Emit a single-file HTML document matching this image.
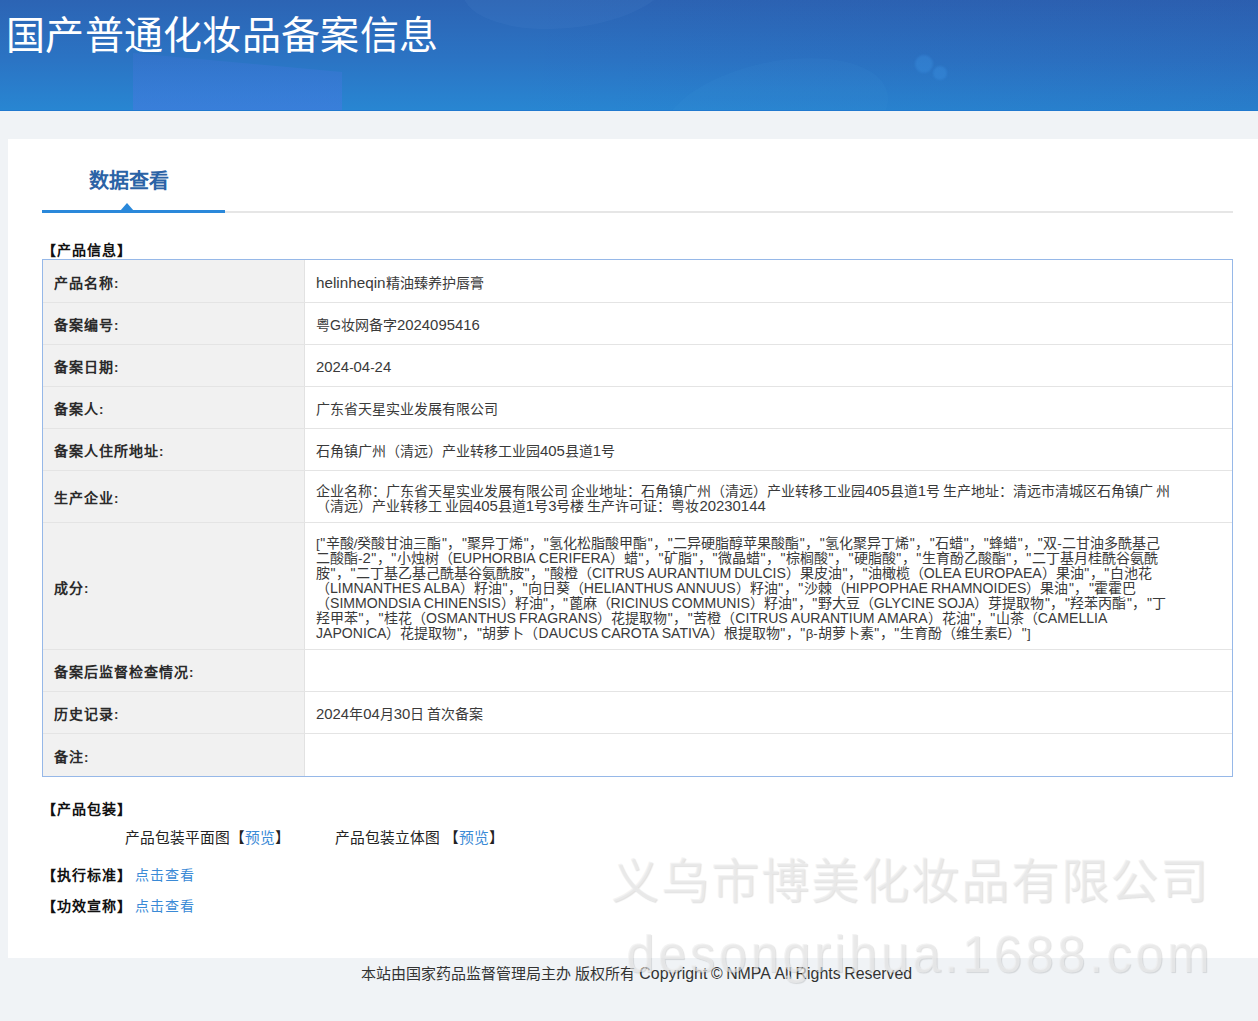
<!DOCTYPE html>
<html lang="zh-CN">
<head>
<meta charset="utf-8">
<style>
*{margin:0;padding:0;box-sizing:border-box}
html,body{width:1258px;height:1021px;overflow:hidden;background:#f0f3f6;font-family:"Liberation Sans",sans-serif;color:#333;font-size:14px}
.a{position:absolute;white-space:nowrap}
span{line-height:0}.U{font-size:14.1px}.L{font-size:15.25px}.D{font-size:14.9px}.Q{padding:0 0.5px}.O{font-size:13.3px}.S{word-spacing:-0.9px}
#hdr{position:absolute;left:0;top:0;width:1258px;height:111px;border-bottom:1px solid #2079cf;background:linear-gradient(180deg,#2c64b4 0%,#2b74c4 55%,#2886d2 100%);overflow:hidden}
#hdr .t{position:absolute;left:6px;top:11px;font-size:39px;letter-spacing:0.3px;color:#fff;line-height:50px;white-space:nowrap}
#panel{position:absolute;left:8px;top:139px;width:1250px;height:819px;background:#fff}
.tab{left:89px;top:166px;font-size:20px;font-weight:bold;color:#2b63a6;line-height:30px}
.gline{position:absolute;left:225px;top:211px;width:1008px;height:2px;background:#e6e6e6}
.bline{position:absolute;left:42px;top:210px;width:183px;height:3px;background:#2a88da}
.tri{position:absolute;left:120px;top:203px;width:0;height:0;border-left:7px solid transparent;border-right:7px solid transparent;border-bottom:8px solid #2a88da}
.sec{font-weight:bold;line-height:20px;color:#111;letter-spacing:1px}
#tbl{position:absolute;left:42px;top:259px;width:1191px;height:518px;border:1px solid #96b8e8;background:#fff}
#lcol{position:absolute;left:43px;top:260px;width:261px;height:516px;background:#f1f1f1}
#vsep{position:absolute;left:304px;top:260px;width:1px;height:516px;background:#e2e2e2}
.hsep{position:absolute;left:43px;width:1189px;height:1px;background:#e4e4e4}
.l{font-weight:bold;color:#2a2a2a;line-height:15px;letter-spacing:1px}
.v{color:#3a3a3a;line-height:15px}
.ft{left:361px;top:962px;font-size:15px;line-height:24px;color:#333}
.lk{color:#3a8ad6}
.pk{font-size:14.75px;line-height:20px;color:#222}
.ft .L,.ft .U,.ft .O,.ft .S{font-size:15.9px}
.wm{color:rgba(238,238,238,0.65);text-shadow:1px 1px 1px rgba(0,0,0,0.12);line-height:60px;-webkit-text-stroke:0px transparent}
</style>
</head>
<body>
<div id="hdr"><div style="position:absolute;left:133px;top:0;width:210px;height:111px;background:linear-gradient(180deg,rgba(78,118,228,0.2) 50%,rgba(78,118,228,0.45) 100%);clip-path:polygon(0 53px,209px 72px,209px 111px,0 111px)"></div><div style="position:absolute;left:462px;top:-64px;width:210px;height:92px;border-radius:50%;background:rgba(120,170,230,0.08);transform:rotate(-6deg)"></div><div style="position:absolute;left:660px;top:62px;width:230px;height:110px;border-radius:50%;background:rgba(80,160,230,0.08);transform:rotate(-12deg)"></div><div style="position:absolute;left:915px;top:55px;width:18px;height:18px;border-radius:50%;background:rgba(60,150,230,0.4);filter:blur(1px)"></div><div style="position:absolute;left:933px;top:66px;width:14px;height:14px;border-radius:50%;background:rgba(60,150,230,0.4);filter:blur(1px)"></div><div style="position:absolute;left:0;top:0;width:1258px;height:111px;background:linear-gradient(90deg,rgba(0,0,0,0) 40%,rgba(40,30,120,0.08) 100%)"></div><div class="t">国产普通化妆品备案信息</div></div>
<div id="panel"></div>
<div class="a tab">数据查看</div>
<div class="gline"></div><div class="bline"></div><div class="tri"></div>

<div class="a sec" style="left:42px;top:240px">【产品信息】</div>
<div id="tbl"></div><div id="lcol"></div><div id="vsep"></div>
<div class="hsep" style="top:302px"></div>
<div class="hsep" style="top:344px"></div>
<div class="hsep" style="top:386px"></div>
<div class="hsep" style="top:428px"></div>
<div class="hsep" style="top:470px"></div>
<div class="hsep" style="top:522px"></div>
<div class="hsep" style="top:649px"></div>
<div class="hsep" style="top:691px"></div>
<div class="hsep" style="top:733px"></div>
<div class="a l" style="left:54px;top:275.5px">产品名称<span class="O">:</span></div>
<div class="a v" style="left:316px;top:275.5px"><span class="L">helinheqin</span>精油臻养护唇膏</div>
<div class="a l" style="left:54px;top:318.0px">备案编号<span class="O">:</span></div>
<div class="a v" style="left:316px;top:318.0px">粤<span class="U">G</span>妆网备字<span class="D">2024095416</span></div>
<div class="a l" style="left:54px;top:360.0px">备案日期<span class="O">:</span></div>
<div class="a v" style="left:316px;top:360.0px"><span class="D">2024</span><span class="O">-</span><span class="D">04</span><span class="O">-</span><span class="D">24</span></div>
<div class="a l" style="left:54px;top:402.0px">备案人<span class="O">:</span></div>
<div class="a v" style="left:316px;top:402.0px">广东省天星实业发展有限公司</div>
<div class="a l" style="left:54px;top:444.0px">备案人住所地址<span class="O">:</span></div>
<div class="a v" style="left:316px;top:444.0px">石角镇广州（清远）产业转移工业园<span class="D">405</span>县道<span class="D">1</span>号</div>
<div class="a l" style="left:54px;top:491.0px">生产企业<span class="O">:</span></div>
<div class="a v" style="left:316px;top:483.5px">企业名称：广东省天星实业发展有限公司<span class="S"> </span>企业地址：石角镇广州（清远）产业转移工业园<span class="D">405</span>县道<span class="D">1</span>号<span class="S"> </span>生产地址：清远市清城区石角镇广<span class="S"> </span>州<br>（清远）产业转移工<span class="S"> </span>业园<span class="D">405</span>县道<span class="D">1</span>号<span class="D">3</span>号楼<span class="S"> </span>生产许可证：粤妆<span class="D">20230144</span></div>
<div class="a l" style="left:54px;top:580.5px">成分<span class="O">:</span></div>
<div class="a v" style="left:316px;top:535.5px"><span class="O">[</span><span class="Q">"</span>辛酸<span class="O">/</span>癸酸甘油三酯<span class="Q">"</span>，<span class="Q">"</span>聚异丁烯<span class="Q">"</span>，<span class="Q">"</span>氢化松脂酸甲酯<span class="Q">"</span>，<span class="Q">"</span>二异硬脂醇苹果酸酯<span class="Q">"</span>，<span class="Q">"</span>氢化聚异丁烯<span class="Q">"</span>，<span class="Q">"</span>石蜡<span class="Q">"</span>，<span class="Q">"</span>蜂蜡<span class="Q">"</span>，<span class="Q">"</span>双<span class="O">-</span>二甘油多酰基己<br>二酸酯<span class="O">-</span><span class="D">2</span><span class="Q">"</span>，<span class="Q">"</span>小烛树（<span class="U">EUPHORBIA</span><span class="S"> </span><span class="U">CERIFERA</span>）蜡<span class="Q">"</span>，<span class="Q">"</span>矿脂<span class="Q">"</span>，<span class="Q">"</span>微晶蜡<span class="Q">"</span>，<span class="Q">"</span>棕榈酸<span class="Q">"</span>，<span class="Q">"</span>硬脂酸<span class="Q">"</span>，<span class="Q">"</span>生育酚乙酸酯<span class="Q">"</span>，<span class="Q">"</span>二丁基月桂酰谷氨酰<br>胺<span class="Q">"</span>，<span class="Q">"</span>二丁基乙基己酰基谷氨酰胺<span class="Q">"</span>，<span class="Q">"</span>酸橙（<span class="U">CITRUS</span><span class="S"> </span><span class="U">AURANTIUM</span><span class="S"> </span><span class="U">DULCIS</span>）果皮油<span class="Q">"</span>，<span class="Q">"</span>油橄榄（<span class="U">OLEA</span><span class="S"> </span><span class="U">EUROPAEA</span>）果油<span class="Q">"</span>，<span class="Q">"</span>白池花<br>（<span class="U">LIMNANTHES</span><span class="S"> </span><span class="U">ALBA</span>）籽油<span class="Q">"</span>，<span class="Q">"</span>向日葵（<span class="U">HELIANTHUS</span><span class="S"> </span><span class="U">ANNUUS</span>）籽油<span class="Q">"</span>，<span class="Q">"</span>沙棘（<span class="U">HIPPOPHAE</span><span class="S"> </span><span class="U">RHAMNOIDES</span>）果油<span class="Q">"</span>，<span class="Q">"</span>霍霍巴<br>（<span class="U">SIMMONDSIA</span><span class="S"> </span><span class="U">CHINENSIS</span>）籽油<span class="Q">"</span>，<span class="Q">"</span>蓖麻（<span class="U">RICINUS</span><span class="S"> </span><span class="U">COMMUNIS</span>）籽油<span class="Q">"</span>，<span class="Q">"</span>野大豆（<span class="U">GLYCINE</span><span class="S"> </span><span class="U">SOJA</span>）芽提取物<span class="Q">"</span>，<span class="Q">"</span>羟苯丙酯<span class="Q">"</span>，<span class="Q">"</span>丁<br>羟甲苯<span class="Q">"</span>，<span class="Q">"</span>桂花（<span class="U">OSMANTHUS</span><span class="S"> </span><span class="U">FRAGRANS</span>）花提取物<span class="Q">"</span>，<span class="Q">"</span>苦橙（<span class="U">CITRUS</span><span class="S"> </span><span class="U">AURANTIUM</span><span class="S"> </span><span class="U">AMARA</span>）花油<span class="Q">"</span>，<span class="Q">"</span>山茶（<span class="U">CAMELLIA</span><br><span class="U">JAPONICA</span>）花提取物<span class="Q">"</span>，<span class="Q">"</span>胡萝卜（<span class="U">DAUCUS</span><span class="S"> </span><span class="U">CAROTA</span><span class="S"> </span><span class="U">SATIVA</span>）根提取物<span class="Q">"</span>，<span class="Q">"</span><span class="O">β-</span>胡萝卜素<span class="Q">"</span>，<span class="Q">"</span>生育酚（维生素<span class="U">E</span>）<span class="Q">"</span><span class="O">]</span></div>
<div class="a l" style="left:54px;top:665.0px">备案后监督检查情况<span class="O">:</span></div>
<div class="a l" style="left:54px;top:707.0px">历史记录<span class="O">:</span></div>
<div class="a v" style="left:316px;top:707.0px"><span class="D">2024</span>年<span class="D">04</span>月<span class="D">30</span>日<span class="S"> </span>首次备案</div>
<div class="a l" style="left:54px;top:749.5px">备注<span class="O">:</span></div>
<div class="a sec" style="left:42px;top:799px">【产品包装】</div>
<div class="a pk" style="left:125px;top:828px">产品包装平面图【<span class="lk">预览</span>】</div>
<div class="a pk" style="left:335px;top:828px">产品包装立体图 【<span class="lk">预览</span>】</div>
<div class="a sec" style="left:42px;top:865px">【执行标准】<span class="lk" style="font-weight:normal;letter-spacing:0.9px;margin-left:3px">点击查看</span></div>
<div class="a sec" style="left:42px;top:896px">【功效宣称】<span class="lk" style="font-weight:normal;letter-spacing:0.9px;margin-left:3px">点击查看</span></div>
<div class="a ft">本站由国家药品监督管理局主办 版权所有 <span class="U">C</span><span class="L">opyright</span><span class="S"> </span><span class="O">©</span><span class="S"> </span><span class="U">NMPA</span><span class="S"> </span><span class="U">A</span><span class="L">ll</span><span class="S"> </span><span class="U">R</span><span class="L">ights</span><span class="S"> </span><span class="U">R</span><span class="L">eserved</span></div>
<div class="a wm" style="left:611px;top:852px;font-size:48px;font-weight:300;letter-spacing:1.95px">义乌市博美化妆品有限公司</div>
<div class="a wm" style="left:626px;top:925px;font-size:51px;font-weight:300;letter-spacing:3.4px">desongrihua.1688.com</div>

</body>
</html>
